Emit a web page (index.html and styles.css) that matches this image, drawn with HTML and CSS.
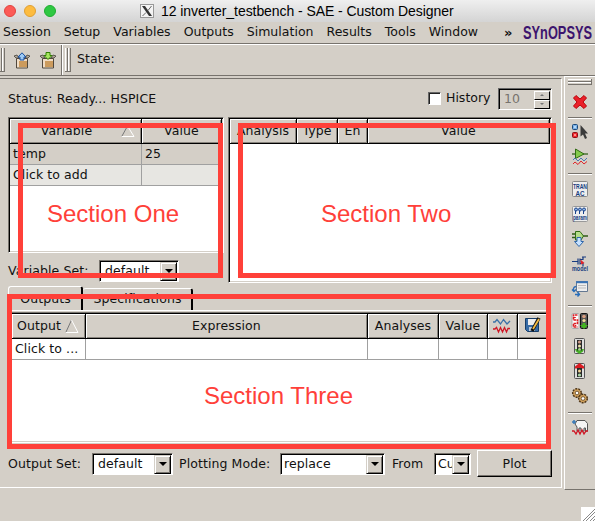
FILE: index.html
```html
<!DOCTYPE html>
<html lang="en">
<head>
<meta charset="utf-8">
<title>12 inverter_testbench - SAE - Custom Designer</title>
<link rel="stylesheet" href="styles.css">
</head>
<body>
<header class="titlebar">
  <div class="lights"><i class="red"></i><i class="amber"></i><i class="green"></i></div>
  <svg class="xicon" width="14" height="14" viewBox="0 0 14 14"><rect x=".5" y=".5" width="13" height="13" fill="#f4f4f4" stroke="#999"/><path d="M2 2h3l7 10H9z" fill="#333"/><path d="M11.500 2L8 6.500M6 8.500L2.500 12" stroke="#666" stroke-width="1"/></svg>
  <span class="title">12 inverter_testbench - SAE - Custom Designer</span>
</header>
<nav class="menubar">
  <span>Session</span><span>Setup</span><span>Variables</span><span>Outputs</span><span>Simulation</span><span>Results</span><span>Tools</span><span>Window</span>
  <b class="more">»</b>
  <svg class="logo" width="72" height="20" viewBox="0 0 72 20"><text x="1" y="15" textLength="69" lengthAdjust="spacingAndGlyphs">SYnOPSYS</text></svg>
</nav>
<div class="toolbar">
  <div class="tools">
    <i class="grip first"></i>
    <svg class="box-a" width="16" height="17" viewBox="0 0 16 17"><path d="M0 4l3-1 2 3H2zM16 4l-3-1-2 3h3z" fill="#b5ab9b" stroke="#44403a" stroke-width=".8"/><path d="M2.500 6.500h11v9.500h-11z" fill="#f0ddc6" stroke="#51483d"/><path d="M5 9h8v6H5z" fill="#cc9b5d"/><path d="M8 .8L12 5h-2v3H6V5H4z" fill="#9dcaf5" stroke="#164fa0"/></svg>
    <svg class="box-b" width="16" height="17" viewBox="0 0 16 17"><path d="M0 4l3-1 2 3H2zM16 4l-3-1-2 3h3z" fill="#b5ab9b" stroke="#44403a" stroke-width=".8"/><path d="M2.500 6.500h11v9.500h-11z" fill="#f0ddc6" stroke="#51483d"/><path d="M5 9h8v6H5z" fill="#cc9b5d"/><path d="M8 7.500L4 3.500h2V.5h4v3h2z" fill="#a7e65f" stroke="#308000"/></svg>
  </div>
  <div class="state"><i class="grip"></i><span>State:</span></div>
</div>
<div class="workspace">
  <main>
    <div class="status">
      <span>Status: Ready... HSPICE</span>
      <i class="check"></i><span class="history">History</span>
      <div class="spin"><span>10</span><div class="arrows"><i class="up"></i><i class="down"></i></div></div>
    </div>
    <div class="upper">
      <div class="left">
        <div class="table vars">
          <div class="row head"><div>Variable<svg class="tri" width="14" height="12" viewBox="0 0 14 12"><path d="M6.500 1L1 11" stroke="#777"/><path d="M6.500 1L13 11.500H1" stroke="#fff" fill="none"/></svg></div><div>Value</div></div>
          <div class="row temp"><div>temp</div><div>25</div></div>
          <div class="row add"><div>Click to add</div><div></div></div>
        </div>
        <div class="varset"><span>Variable Set:</span><div class="select"><span>default</span><i class="drop"></i></div></div>
      </div>
      <div class="table analyses"><div class="row head"><div>Analysis</div><div>Type</div><div>En</div><div>Value</div></div></div>
    </div>
    <div class="tabs"><div class="tab active">Outputs</div><div class="tab">Specifications</div></div>
    <div class="pane">
      <div class="table outputs">
        <div class="row head"><div>Output<svg class="tri" width="14" height="14" viewBox="0 0 14 14"><path d="M6.500 1L1 13" stroke="#777"/><path d="M6.500 1L13 13.500H1" stroke="#fff" fill="none"/></svg></div><div>Expression</div><div>Analyses</div><div>Value</div>
          <div><svg width="17" height="16" viewBox="0 0 17 16" fill="none"><path d="M0 4h2l2-2.500 3.500 4.500 3-4.500L14 6l3-3" stroke="#3b71a8" stroke-width="1.300"/><path d="M0 11h2l1.500-1.500L5.500 14l2-4.500 2 4.500 2-4.500 2 4.500 1.500-3.500h2" stroke="#cf1624" stroke-width="1.300"/></svg></div>
          <div><svg width="17" height="17" viewBox="0 0 17 17"><path d="M1.500 1.500h13v13h-11l-2-2z" fill="#376ba5" stroke="#173d68"/><path d="M4 2h9v6H4z" fill="#eee"/><path d="M5 10h6v4H5z" fill="#b9c8d8"/><path d="M15 1L8 14" stroke="#111" stroke-width="3.500"/><path d="M15 2L9 12" stroke="#f2ba43" stroke-width="1.800"/></svg></div></div>
        <div class="row add"><div>Click to ...</div><div></div><div></div><div></div><div></div><div></div></div>
      </div>
    </div>
    <div class="bottom">
      <span class="set">Output Set:</span><div class="select s1"><span>default</span><i class="drop"></i></div>
      <span class="mode">Plotting Mode:</span><div class="select s2"><span>replace</span><i class="drop"></i></div>
      <span class="from">From</span><div class="select s3"><span>Cu</span><i class="drop"></i></div>
      <div class="plot">Plot</div>
    </div>
  </main>
  <aside>
    <i class="hgrip"></i>
    <svg viewBox="0 0 16 16"><path d="M1.500 4L4 1.500l4 3.500 4-3.500L14.500 4 11 8l3.500 4-2.500 2.500L8 11l-4 3.500L1.500 12 5 8z" fill="#ea2029" stroke="#b9050c"/></svg>
    <i class="sep"></i>
    <div class="group">
      <svg viewBox="0 0 16 16"><rect x=".5" y=".5" width="5" height="5" rx="1" fill="#79b1e8" stroke="#204a78"/><rect x="2" y="2" width="2" height="2" fill="#b8d8f5"/><rect x=".5" y="8.500" width="5" height="5" rx="1" fill="#ee292d" stroke="#8c0f16"/><rect x="2" y="10" width="2" height="2" fill="#ff8c8c"/><path d="M8.500 1v11.500l2.500-2 2 4.500 2-1-2-4.500h3z" fill="#3b3b3b"/></svg>
      <svg viewBox="0 0 16 16"><path d="M0 5h16" stroke="#285a12" stroke-width="1.200"/><path d="M3.500 0v9.500L12 5z" fill="#83ca4b" stroke="#316c14"/><path d="M1 11l2-2 3 3 3-3 3 3 3-3" fill="none" stroke="#3770b0" stroke-width=".9"/><path d="M1 15l2-2 3 2.500L9 12l3 3 3-2.500" fill="none" stroke="#e0262a"/></svg>
    </div>
    <i class="sep wide"></i>
    <div class="group">
      <svg viewBox="0 0 16 16"><rect x=".5" y=".5" width="15" height="15" rx="1" fill="#eee" stroke="#888"/><text x="1" y="8" textLength="14" lengthAdjust="spacingAndGlyphs">TRAN</text><text x="3.500" y="14.500" textLength="9" lengthAdjust="spacingAndGlyphs">AC</text></svg>
      <svg viewBox="0 0 16 16"><rect x=".5" y=".5" width="15" height="15" rx="1" fill="#eee" stroke="#999"/><g fill="#8fb5e9" stroke="#18428a"><circle cx="4" cy="3.500" r="1.500"/><circle cx="8" cy="3.500" r="1.500"/><circle cx="12" cy="3.500" r="1.500"/><path d="M3.500 5v3m4-3v3m4-3v3"/></g><text x="1" y="13.500" textLength="14" lengthAdjust="spacingAndGlyphs">param</text></svg>
      <svg viewBox="0 0 16 16"><path d="M0 3h4M0 6.500h4M10 5h6" stroke="#315b18" stroke-width="1.300"/><path d="M3.500.5h4.500l3.500 4.500-2.500 4H3.500z" fill="#b4dd88" stroke="#316c14"/><path d="M5 6.500h4v4h2.500L7 15.500 2.500 10.500H5z" fill="#c7e2ff" stroke="#3167aa"/></svg>
      <svg viewBox="0 0 16 16"><path d="M0 5.500h6M6 2.500v6M8 2.500v6M8 3.500h3V1M8 7.500h3V10M10 1h4" fill="none" stroke="#183b80" stroke-width="1.200"/><path d="M8.500 3.500l4 3.500-3.500 1.500z" fill="#e4252a"/><text x="0" y="15" textLength="16" lengthAdjust="spacingAndGlyphs">model</text></svg>
      <svg viewBox="0 0 16 16"><path d="M4.500.5h11v10h-11z" fill="#eee" stroke="#647891"/><path d="M4 1.200h12" stroke="#3974b6" stroke-width="2"/><path d="M6 4.500h8M6 7h8" stroke="#bbb"/><path d="M4 5.500C1 6 1 8.500 2 10M0 8.500l2 2 2-2M3 13.500h4M5.500 11l2 2.500-2 2" fill="none" stroke="#286db9" stroke-width="1.400"/></svg>
    </div>
    <i class="sep wide"></i>
    <div class="group">
      <svg viewBox="0 0 16 16"><rect x="0" y=".5" width="7" height="15" rx="1" fill="#fff" stroke="#aaa"/><path d="M5.500 2h-4v5h4v3.500h-4V14h4M3 4v1M3.500 12v1" stroke="#dc2025" stroke-width="1.600" stroke-dasharray="2.500 .5" fill="none"/><rect x="8.500" y=".5" width="7" height="15" rx="1" fill="#555" stroke="#111"/><circle cx="12" cy="3.500" r="1.800" fill="#d89e81"/><circle cx="12" cy="7.500" r="1.600" fill="#f4e29b"/><path d="M10.500 10h3v2H16l-4 4-4-4h2.500z" fill="#43b51f"/></svg>
      <svg viewBox="0 0 16 16"><rect x="2.500" y=".5" width="10" height="15" rx="1" fill="#ddd" stroke="#555"/><path d="M5 2h5v12H5z" fill="#292929"/><circle cx="7.500" cy="4" r="1.600" fill="#cc9b89"/><circle cx="7.500" cy="8" r="1.500" fill="#eee2ad"/><circle cx="7.500" cy="11.500" r="1.500" fill="#a5dd8d"/><path d="M3 11h2v1.500h5V11h2l-1 2.500-3.500 2.500L4 13.500z" fill="#47af26"/></svg>
      <svg viewBox="0 0 16 16"><rect x="2.500" y=".5" width="10" height="15" rx="1" fill="#ddd" stroke="#555"/><path d="M5 2h5v12H5z" fill="#292929"/><circle cx="7.500" cy="8" r="1.500" fill="#f2d596"/><circle cx="7.500" cy="12" r="1.600" fill="#a9d5a5"/><path d="M7.500 0L12 3.500v2h-2V5H5v.5H3v-2z" fill="#d91c22"/></svg>
      <svg viewBox="0 0 16 16"><g fill="#d0a05b" stroke="#4d3519"><circle cx="5" cy="5" r="4.300" stroke-width="1.500" stroke-dasharray="2 1"/><circle cx="11" cy="10.500" r="4.300" stroke-width="1.500" stroke-dasharray="2 1"/><circle cx="5" cy="5" r="1.800" fill="#fff" stroke-width=".7"/><circle cx="11" cy="10.500" r="1.800" fill="#fff" stroke-width=".7"/></g></svg>
    </div>
    <i class="sep tight"></i>
    <svg viewBox="0 0 16 16"><path d="M3 5l2-3.500h8l2.500 3V12h-2V9h-1.500v3H9V9H7v3H5V8z" fill="#f4f4f4" stroke="#555"/><path d="M0 3h4M2 1v4" stroke="#3779b8" stroke-width="1.500"/><path d="M0 12h2l2 3 2-4 2 4 2-4 2 4 2-3h2" fill="none" stroke="#cf1624" stroke-width="1.300"/></svg>
  </aside>
</div>
<footer><svg width="14" height="14" viewBox="0 0 14 14"><path d="M0 0h14v14H0z" fill="#fff"/><path d="M2 14L14 2M5 14l9-9M9 14l5-5M12 14l2-2" stroke="#888"/></svg></footer>
<div class="mark one"><span>Section One</span></div>
<div class="mark two"><span>Section Two</span></div>
<div class="mark three"><span>Section Three</span></div>
</body>
</html>
```
FILE: styles.css
```css
* { box-sizing: border-box; }
body { margin: 0; width: 595px; height: 521px; overflow: hidden; position: relative; display: flex; flex-direction: column; background: #d4cfc7; color: #111; font: 12.5px/16px "DejaVu Sans", sans-serif; letter-spacing: .09px; white-space: nowrap; }
svg { display: block; flex: none; overflow: visible; letter-spacing: 0; }
i { display: block; flex: none; }

.titlebar { height: 22px; flex: none; display: flex; align-items: center; background: linear-gradient(#efefef, #d4d4d4); }
.lights { display: flex; gap: 8px; padding-left: 4px; width: 140px; }
.lights i { width: 12px; height: 12px; border-radius: 50%; border: 1px solid; }
.lights .red { background: #fc5b57; border-color: #e2443f; }
.lights .amber { background: #fdbc40; border-color: #e0a033; }
.lights .green { background: #2fc843; border-color: #1fad31; }
.title { margin-left: 7px; font: 14px/20px "Liberation Sans", sans-serif; letter-spacing: -.07px; color: #000; }

.menubar { height: 22px; flex: none; display: flex; gap: 13px; padding: 2px 0 0 3px; border-bottom: 1px solid #77736d; letter-spacing: .02px; }
.more { margin-left: 13px; font-size: 13px; line-height: 18px; }
.logo { margin: 0 0 0 -4px; }
.logo text { font: bold 17.5px "Liberation Sans Narrow", "Liberation Sans", sans-serif; fill: #3c146e; }

.toolbar { height: 32px; flex: none; display: flex; border-top: 1px solid #fff; border-bottom: 1px solid #77736d; }
.tools { width: 62px; display: flex; border-right: 1px solid #77736d; padding-top: 3px; }
.grip { width: 6px; height: 24px; border: 1px solid #77736d; border-width: 0 1px 1px 0; background: linear-gradient(90deg, #fff 0 1px, #d4cfc7 1px 2px, #77736d 2px 3px, #fff 3px 4px, #d4cfc7 4px); }
.grip.first { margin-left: -1px; }
.box-a { margin: 4px 0 0 9px; }
.box-b { margin: 4px 0 0 10px; }
.state { display: flex; border-left: 1px solid #fff; padding: 3px 0 0 2px; }
.state span { margin: 3px 0 0 6px; }

.workspace { display: flex; height: 414px; flex: none; }
main { width: 562px; height: 410px; margin-top: 2px; border: 1px solid #fff; border-left: 0; border-top-color: #77736d; padding: 9px 9px 0 8px; display: flex; flex-direction: column; }
.status { height: 22px; display: flex; align-items: center; flex: none; }
.check { margin-left: auto; width: 13px; height: 13px; background: #fff; border: 1px solid; border-color: #666 #fff #fff #666; box-shadow: inset 1px 1px #222; margin-bottom: 2px; }
.history { width: 46px; margin: -2px 6px 0 5px; letter-spacing: 0; }
.spin { width: 54px; height: 22px; border: 1px solid; border-color: #666 #fff #fff #666; box-shadow: inset 1px 1px #000; display: flex; justify-content: space-between; padding: 2px 1px 0 5px; color: #77736d; }
.arrows i { width: 16px; height: 9px; border: 1px solid; border-color: #fff #000 #000 #fff; }
.arrows i::after { content: ""; display: block; margin: 2px auto; width: 0; border: 2px solid transparent; border-top-width: 0; border-bottom-color: #777; }
.arrows .down::after { border-width: 2px 2px 0; border-top-color: #777; }

.upper { display: flex; gap: 4px; margin-top: 7px; height: 166px; flex: none; }
.left { width: 216px; display: flex; flex-direction: column; }
.table { background: #fff; border: 1px solid; border-color: #77736d #fff #fff #77736d; box-shadow: inset 1px 1px #000, inset -1px -1px #d4cfc7; padding: 1px; overflow: hidden; }
.row { display: grid; height: 21px; }
.row > div { border-right: 1px solid #a0a0a0; border-bottom: 1px solid #a0a0a0; padding: 2px 0 0 3px; overflow: hidden; }
.row.head { height: 25px; }
.row.head > div { position: relative; display: flex; align-items: center; justify-content: center; padding: 0; background: #d4cfc7; border-right: 1px solid #000; border-bottom: 1px solid #000; box-shadow: inset 1px 1px #fff, inset -1px -1px #87837c; }
.vars { height: 136px; flex: none; }
.vars .row { grid-template-columns: 132px 80px; }
.vars .row.head > div:first-child { padding-right: 18px; }
.vars .tri { position: absolute; left: 111px; top: 6px; }
.vars .temp > div { background: #d4cfc7; }
.vars .add > div { background: #e7e6e2; }
.varset { display: flex; align-items: center; margin-top: 7px; }
.varset > span { width: 91px; }
.varset .select { width: 80px; }
.select { height: 22px; background: #fff; border: 1px solid; border-color: #77736d #fff #fff #77736d; box-shadow: inset 1px 1px #000; display: flex; padding: 1px; flex: none; overflow: hidden; }
.select span { flex: 1 1 0; min-width: 0; overflow: hidden; padding-left: 4px; line-height: 18px; }
.drop { width: 17px; height: 19px; background: #d4cfc7; border: 1px solid; border-color: #d4cfc7 #000 #000 #d4cfc7; box-shadow: inset 1px 1px #fff, inset -1px -1px #77736d; }
.drop::after { content: ""; display: block; margin: 6px 0 0 4px; width: 0; border: 4px solid transparent; border-top-color: #000; border-bottom: 0; }
.analyses { width: 324px; }
.analyses .row { grid-template-columns: 67px 41px 30px 182px; }

.tabs { display: flex; align-items: flex-end; height: 27px; flex: none; padding-top: 3px; }
.tab { height: 22px; width: 110px; text-align: center; border-top: 1px solid #fff; border-right: 2px solid #000; border-radius: 3px 3px 0 0; line-height: 20px; padding-left: 1px; }
.tab.active { width: 75px; height: 24px; border-left: 1px solid #fff; line-height: 24px; }
.pane { height: 135px; flex: none; margin-right: 1px; border: 1px solid; border-color: #fff #000 #77736d #fff; padding: 1px 0 0 1px; }
.outputs { height: 131px; margin-right: 1px; }
.outputs .row { grid-template-columns: 74px 282px 71px 49px 30px 32px; }
.outputs .row.head > div { padding-bottom: 1px; }
.outputs .head svg { margin-right: 3px; }
.outputs .head .tri { margin: 0 0 0 4px; }
.outputs .row.head > div:first-child { justify-content: flex-start; padding-left: 5px; }

.bottom { display: flex; align-items: center; height: 27px; flex: none; margin-top: 5px; }
.bottom > span { flex: none; }
.set { width: 84px; }
.s1 { width: 81px; }
.mode { width: 107px; padding-left: 6px; }
.s2 { width: 105px; }
.s2 span { padding-left: 2px; }
.from { width: 49px; padding-left: 7px; }
.s3 { width: 37px; }
.s3 span { padding-left: 2px; }
.plot { width: 75px; height: 27px; margin-left: auto; text-align: center; line-height: 25px; border: 1px solid; border-color: #fff #000 #000 #fff; box-shadow: inset -1px -1px #77736d; }

aside { width: 31px; height: 414px; margin-left: 2px; border: 1px solid #fff; border-right: 0; border-bottom-color: #77736d; display: flex; flex-direction: column; align-items: center; }
aside svg { width: 16px; height: 16px; }
aside text { font: bold 7px "Liberation Sans", sans-serif; fill: #173d80; }
.hgrip { width: 24px; height: 6px; margin: 2px 0 9px; border: 1px solid #77736d; border-width: 0 1px 1px 0; background: linear-gradient(#fff 0 1px, #d4cfc7 1px 2px, #77736d 2px 3px, #fff 3px 4px, #d4cfc7 4px); }
.sep { width: 24px; height: 2px; background: #77736d; border-bottom: 1px solid #fff; margin: 7px 0 5px; }
.sep.wide { margin: 8px 0 6px; }
.sep.tight { margin: 8px 0 5px; }
.group { display: flex; flex-direction: column; gap: 9px; }
footer { flex: 1; display: flex; justify-content: flex-end; align-items: flex-end; }

.mark { position: absolute; border: 5px solid #ff4039; color: #ff4039; font: 24px/28px "Liberation Sans", sans-serif; letter-spacing: 0; }
.mark span { position: absolute; }
.one { left: 18px; top: 123px; width: 205px; height: 155px; }
.one span { left: 24px; top: 72px; }
.two { left: 238px; top: 123px; width: 318px; height: 155px; }
.two span { left: 78px; top: 72px; }
.three { left: 7px; top: 294px; width: 544px; height: 155px; }
.three span { left: 192px; top: 83px; }
```
